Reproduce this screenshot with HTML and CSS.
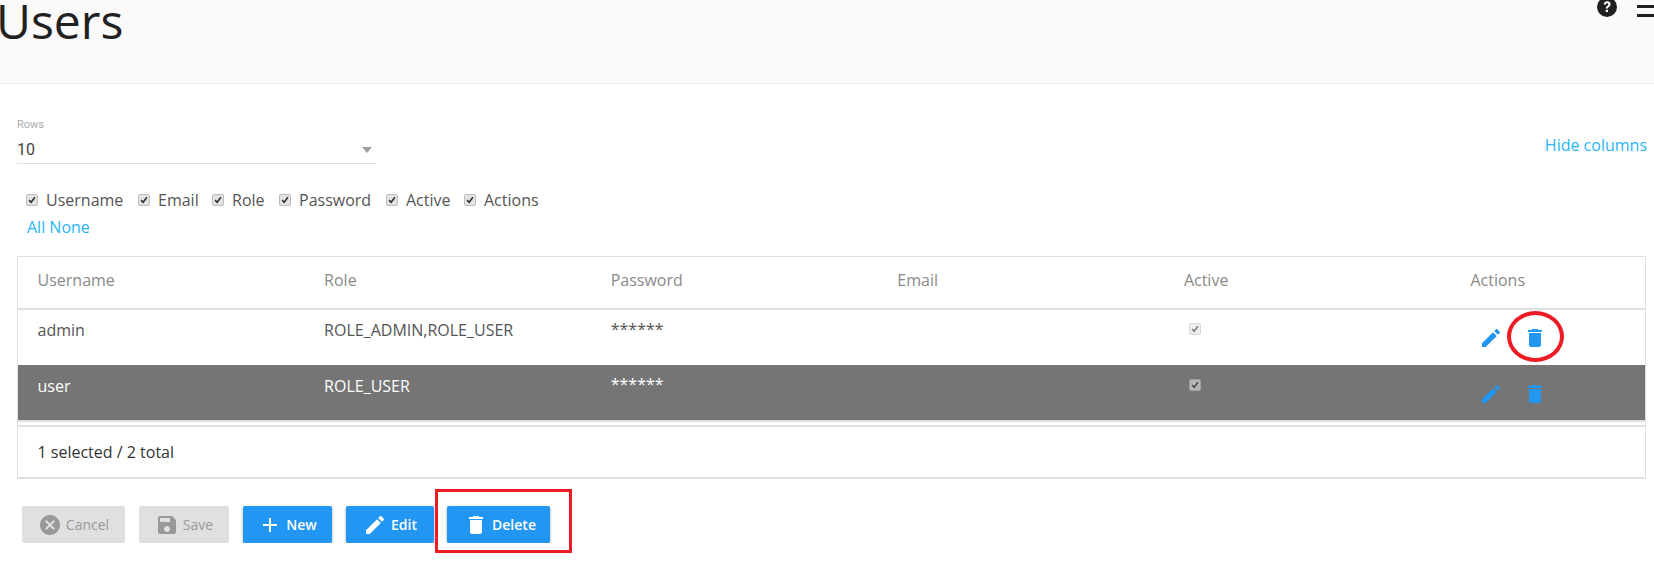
FILE: index.html
```html
<!DOCTYPE html>
<html lang="en">
<head>
    <meta charset="UTF-8">
    <meta name="viewport" content="width=device-width, initial-scale=1.0">
    <title>Users</title>
    <link rel="stylesheet" href="styles.css">
</head>

<body>

    <header class="topbar">
        <h1 class="title">Users</h1>
        <div class="topIcons">
            <svg class="helpIcon" viewBox="0 0 20 20"><circle cx="10" cy="10" r="10" fill="#212121"/><path d="M6.7 7.6c0-2 1.500-3.300 3.500-3.300 2 0 3.400 1.200 3.400 3 0 1.300-.7 2-1.600 2.600-.8.500-1 .8-1 1.600H8.800c0-1.400.4-2 1.300-2.600.8-.5 1.200-.9 1.200-1.500 0-.7-.5-1.100-1.200-1.100-.8 0-1.200.5-1.300 1.300zM8.700 12.700H11v2.400H8.700z" fill="#fafafa"/></svg>
            <div class="menuIcon"><span></span><span></span><span></span></div>
        </div>
    </header>

    <section class="content">
        <div class="rowsBar">
            <div class="rowsSelect">
                <div class="rowsLabel">Rows</div>
                <div class="rowsValue">10<span class="caret"></span></div>
            </div>
            <a class="link hideLink">Hide columns</a>
        </div>

        <div class="columnPicker">
            <label class="pick pickUser"><input type="checkbox" checked>Username</label>
            <label class="pick pickEmail"><input type="checkbox" checked>Email</label>
            <label class="pick pickRole"><input type="checkbox" checked>Role</label>
            <label class="pick pickPass"><input type="checkbox" checked>Password</label>
            <label class="pick pickActive"><input type="checkbox" checked>Active</label>
            <label class="pick"><input type="checkbox" checked>Actions</label>
        </div>
        <div class="allNone"><a class="link">All</a> <a class="link">None</a></div>

        <div class="tableBox">
            <table class="users">
                <thead>
                    <tr>
                        <th>Username</th>
                        <th>Role</th>
                        <th>Password</th>
                        <th>Email</th>
                        <th>Active</th>
                        <th>Actions</th>
                    </tr>
                </thead>
                <tbody>
                    <tr>
                        <td>admin</td>
                        <td>ROLE_ADMIN,ROLE_USER</td>
                        <td class="stars">******</td>
                        <td></td>
                        <td><input class="cellCheck" type="checkbox" checked disabled></td>
                        <td class="actions">
                            <svg class="editIcon" viewBox="0 0 24 24"><path d="M3 17.250V21h3.750L17.810 9.940l-3.750-3.750L3 17.250zM20.710 7.040c.39-.39.39-1.020 0-1.410l-2.340-2.340c-.39-.39-1.020-.39-1.410 0l-1.830 1.830 3.750 3.750 1.830-1.830z"/></svg>
                            <svg class="trashIcon" viewBox="0 0 24 24"><path d="M6 19c0 1.100.9 2 2 2h8c1.100 0 2-.9 2-2V7H6v12zM19 4h-3.500l-1-1h-5l-1 1H5v2h14V4z"/></svg>
                        </td>
                    </tr>
                    <tr class="selected">
                        <td>user</td>
                        <td>ROLE_USER</td>
                        <td class="stars">******</td>
                        <td></td>
                        <td><input class="cellCheck" type="checkbox" checked disabled></td>
                        <td class="actions">
                            <svg class="editIcon" viewBox="0 0 24 24"><path d="M3 17.250V21h3.750L17.810 9.940l-3.750-3.750L3 17.250zM20.710 7.040c.39-.39.39-1.020 0-1.410l-2.340-2.340c-.39-.39-1.020-.39-1.410 0l-1.830 1.830 3.750 3.750 1.830-1.830z"/></svg>
                            <svg class="trashIcon" viewBox="0 0 24 24"><path d="M6 19c0 1.100.9 2 2 2h8c1.100 0 2-.9 2-2V7H6v12zM19 4h-3.500l-1-1h-5l-1 1H5v2h14V4z"/></svg>
                        </td>
                    </tr>
                </tbody>
            </table>
            <div class="tableFoot">1 selected / 2 total</div>
        </div>

        <div class="buttons">
            <button class="btn off btnCancel">
                <svg viewBox="0 0 24 24"><path d="M12 2C6.470 2 2 6.470 2 12s4.470 10 10 10 10-4.470 10-10S17.530 2 12 2zm5 13.590L15.590 17 12 13.410 8.410 17 7 15.590 10.590 12 7 8.410 8.410 7 12 10.590 15.590 7 17 8.410 13.410 12 17 15.590z"/></svg>
                Cancel
            </button>
            <button class="btn off btnSave">
                <svg viewBox="0 0 24 24"><path d="M17 3H5c-1.110 0-2 .9-2 2v14c0 1.100.89 2 2 2h14c1.100 0 2-.9 2-2V7l-4-4zm-5 16c-1.660 0-3-1.340-3-3s1.340-3 3-3 3 1.340 3 3-1.340 3-3 3zm3-10H5V5h10v4z"/></svg>
                Save
            </button>
            <button class="btn on btnNew">
                <svg viewBox="0 0 24 24"><path d="M19 13h-6v6h-2v-6H5v-2h6V5h2v6h6v2z"/></svg>
                New
            </button>
            <button class="btn on btnEdit">
                <svg viewBox="0 0 24 24"><path d="M3 17.250V21h3.750L17.810 9.940l-3.750-3.750L3 17.250zM20.710 7.040c.39-.39.39-1.020 0-1.410l-2.340-2.340c-.39-.39-1.020-.39-1.410 0l-1.830 1.830 3.750 3.750 1.830-1.830z"/></svg>
                Edit
            </button>
            <button class="btn on btnDelete">
                <svg viewBox="0 0 24 24"><path d="M6 19c0 1.100.9 2 2 2h8c1.100 0 2-.9 2-2V7H6v12zM19 4h-3.500l-1-1h-5l-1 1H5v2h14V4z"/></svg>
                Delete
            </button>
        </div>
    </section>

    <!-- red marks drawn over the screenshot -->
    <div class="markCircle"></div>
    <div class="markBox"></div>

</body>

</html>
```

FILE: styles.css
```css
body {
    overflow: hidden;
    margin: 0;
    background-color: #fff;
    font-family: "Open Sans", sans-serif;
    font-size: 16px;
    color: #555;
}

.topbar {
    display: flex;
    justify-content: space-between;
    box-sizing: border-box;
    height: 84px;
    background-color: #fafafa;
    border-bottom: 1px solid #eee;
    overflow: hidden;
}

.title {
    margin: 0 0 0 -4px;
    font-size: 48px;
    font-weight: 400;
    line-height: 41px;
    color: #212121;
}

.topIcons {
    display: flex;
    gap: 20px;
    margin-top: -3px;
    margin-right: -3px;
}

.helpIcon {
    width: 20px;
    height: 20px;
}

.menuIcon {
    display: flex;
    flex-direction: column;
    gap: 6px;
    width: 20px;
    margin-top: -1px;
}

.menuIcon span {
    height: 3px;
    background-color: #212121;
}

.content {
    padding: 0 8px 0 17px;
}

.rowsBar {
    display: flex;
    justify-content: space-between;
    align-items: center;
    padding-top: 33px;
}

.rowsSelect {
    width: 359px;
    border-bottom: 1px solid #e0e0e0;
}

.rowsLabel {
    font-family: Roboto, sans-serif;
    font-size: 11px;
    line-height: 16px;
    color: #aaa;
}

.rowsValue {
    display: flex;
    justify-content: space-between;
    align-items: center;
    padding-right: 4px;
    padding-top: 3px;
    font-size: 16px;
    line-height: 27px;
    color: #444;
    font-family: Roboto, sans-serif;
}

.caret {
    border-left: 5px solid transparent;
    border-right: 5px solid transparent;
    border-top: 6px solid #9e9e9e;
}

.link {
    color: #29b6f6;
}

.hideLink {
    margin-right: -1px;
    margin-top: 8px;
}

.columnPicker {
    display: flex;
    margin-top: 23px;
    padding-left: 9px;
    line-height: 26px;
}

.pick {
    display: flex;
    align-items: center;
}

.pickUser { width: 112px; }
.pickEmail { width: 74px; }
.pickRole { width: 67px; }
.pickPass { width: 107px; }
.pickActive { width: 78px; }

.pick input,
.cellCheck {
    appearance: none;
    box-sizing: border-box;
    width: 12px;
    height: 12px;
    margin: 0;
    border: 1px solid #bdbdbd;
    border-radius: 2px;
    background: #e4e4e4 url("data:image/svg+xml,%3Csvg xmlns='http://www.w3.org/2000/svg' viewBox='0 0 12 12'%3E%3Cpath d='M2.500 6.200 5 8.700l4.500-6' fill='none' stroke='%23333' stroke-width='2'/%3E%3C/svg%3E") center / 10px no-repeat;
}

.pick input {
    margin-right: 8px;
}

.allNone {
    padding-left: 10px;
    padding-top: 1px;
    line-height: 26px;
}

.tableBox {
    margin-top: 16px;
    margin-right: 0;
    border: 1px solid #e0e0e0;
    border-width: 1px 1px 2px 1px;
}

.users {
    width: 100%;
    border-collapse: collapse;
    table-layout: fixed;
    border-bottom: 2px solid #e0e0e0;
    margin-bottom: 0;
}

.users th:nth-child(-n+5) {
    width: 286.600px;
}

.users th {
    box-sizing: border-box;
    height: 52px;
    padding: 0 0 6px 19.500px;
    font-weight: 400;
    text-align: left;
    color: #8a8a8a;
    border-bottom: 2px solid #e0e0e0;
}

.users td {
    box-sizing: border-box;
    height: 56px;
    padding: 8px 0 0 19.500px;
    vertical-align: top;
    line-height: 24px;
    color: #555;
}

.users td.stars {
    padding-top: 7px;
}

.users td .cellCheck {
    display: block;
    margin: 5px 0 0 5px;
    opacity: .6;
}

.users td.actions {
    padding: 16px 0 0 28px;
    fill: #2196f3;
}

.actions svg {
    display: inline-block;
    width: 24px;
    height: 24px;
    vertical-align: top;
}

.actions .trashIcon {
    margin-left: 16px;
}

.selected {
    background-color: #757575;
}

.users .selected td {
    color: #fff;
    padding-top: 9px;
}

.users .selected td.stars {
    padding-top: 7px;
}

.users .selected td.actions {
    padding-top: 17px;
}

.tableFoot {
    margin-top: 3px;
    border-top: 2px solid #e0e0e0;
    padding: 12px 19.500px 0;
    height: 38px;
    line-height: 26px;
    color: #333;
}

.buttons {
    display: flex;
    margin-top: 27px;
    padding-left: 5px;
}

.btn {
    display: flex;
    align-items: center;
    justify-content: center;
    gap: 4px;
    box-sizing: border-box;
    height: 37px;
    padding: 0;
    border: 0;
    border-radius: 2px;
    font-family: "Open Sans", sans-serif;
    font-size: 14px;
}

.btn svg {
    width: 24px;
    height: 24px;
}

.off {
    background-color: #e0e0e0;
    color: #999;
    fill: #999;
}

.on {
    background-color: #2196f3;
    color: #fff;
    fill: #fff;
    font-weight: 600;
    box-shadow: 0 1px 3px rgba(0, 0, 0, .35);
}

.btnCancel { width: 103px; margin-right: 14px; }
.btnSave { width: 90px; margin-right: 14px; }
.btnNew { width: 89px; margin-right: 14px; }
.btnEdit { width: 88px; margin-right: 13px; }
.btnDelete { width: 103px; padding-left: 3px; }

.markCircle {
    position: absolute;
    left: 1507px;
    top: 311px;
    width: 57px;
    height: 51px;
    box-sizing: border-box;
    border: 4px solid #ed1c24;
    border-radius: 50%;
}

.markBox {
    position: absolute;
    left: 435px;
    top: 489px;
    width: 137px;
    height: 64px;
    box-sizing: border-box;
    border: 3px solid #ed1c24;
}
```
